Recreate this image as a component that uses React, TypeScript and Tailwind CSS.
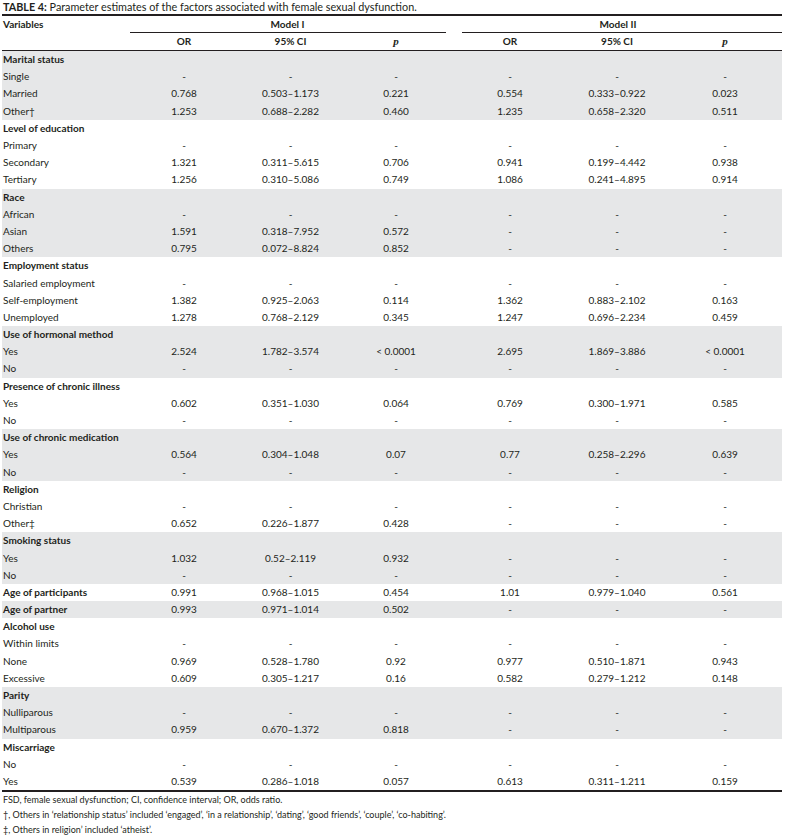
import React from "react";

type Row = { label: string; bold?: boolean; vals?: string[] };
type Group = { gray: boolean; rows: Row[] };

const D = ["-", "-", "-", "-", "-", "-"];

const groups: Group[] = [
  {
    gray: true,
    rows: [
      { label: "Marital status", bold: true },
      { label: "Single", vals: D },
      { label: "Married", vals: ["0.768", "0.503–1.173", "0.221", "0.554", "0.333–0.922", "0.023"] },
      { label: "Other†", vals: ["1.253", "0.688–2.282", "0.460", "1.235", "0.658–2.320", "0.511"] },
    ],
  },
  {
    gray: false,
    rows: [
      { label: "Level of education", bold: true },
      { label: "Primary", vals: D },
      { label: "Secondary", vals: ["1.321", "0.311–5.615", "0.706", "0.941", "0.199–4.442", "0.938"] },
      { label: "Tertiary", vals: ["1.256", "0.310–5.086", "0.749", "1.086", "0.241–4.895", "0.914"] },
    ],
  },
  {
    gray: true,
    rows: [
      { label: "Race", bold: true },
      { label: "African", vals: D },
      { label: "Asian", vals: ["1.591", "0.318–7.952", "0.572", "-", "-", "-"] },
      { label: "Others", vals: ["0.795", "0.072–8.824", "0.852", "-", "-", "-"] },
    ],
  },
  {
    gray: false,
    rows: [
      { label: "Employment status", bold: true },
      { label: "Salaried employment", vals: D },
      { label: "Self-employment", vals: ["1.382", "0.925–2.063", "0.114", "1.362", "0.883–2.102", "0.163"] },
      { label: "Unemployed", vals: ["1.278", "0.768–2.129", "0.345", "1.247", "0.696–2.234", "0.459"] },
    ],
  },
  {
    gray: true,
    rows: [
      { label: "Use of hormonal method", bold: true },
      { label: "Yes", vals: ["2.524", "1.782–3.574", "< 0.0001", "2.695", "1.869–3.886", "< 0.0001"] },
      { label: "No", vals: D },
    ],
  },
  {
    gray: false,
    rows: [
      { label: "Presence of chronic illness", bold: true },
      { label: "Yes", vals: ["0.602", "0.351–1.030", "0.064", "0.769", "0.300–1.971", "0.585"] },
      { label: "No", vals: D },
    ],
  },
  {
    gray: true,
    rows: [
      { label: "Use of chronic medication", bold: true },
      { label: "Yes", vals: ["0.564", "0.304–1.048", "0.07", "0.77", "0.258–2.296", "0.639"] },
      { label: "No", vals: D },
    ],
  },
  {
    gray: false,
    rows: [
      { label: "Religion", bold: true },
      { label: "Christian", vals: D },
      { label: "Other‡", vals: ["0.652", "0.226–1.877", "0.428", "-", "-", "-"] },
    ],
  },
  {
    gray: true,
    rows: [
      { label: "Smoking status", bold: true },
      { label: "Yes", vals: ["1.032", "0.52–2.119", "0.932", "-", "-", "-"] },
      { label: "No", vals: D },
    ],
  },
  {
    gray: false,
    rows: [{ label: "Age of participants", bold: true, vals: ["0.991", "0.968–1.015", "0.454", "1.01", "0.979–1.040", "0.561"] }],
  },
  {
    gray: true,
    rows: [{ label: "Age of partner", bold: true, vals: ["0.993", "0.971–1.014", "0.502", "-", "-", "-"] }],
  },
  {
    gray: false,
    rows: [
      { label: "Alcohol use", bold: true },
      { label: "Within limits", vals: D },
      { label: "None", vals: ["0.969", "0.528–1.780", "0.92", "0.977", "0.510–1.871", "0.943"] },
      { label: "Excessive", vals: ["0.609", "0.305–1.217", "0.16", "0.582", "0.279–1.212", "0.148"] },
    ],
  },
  {
    gray: true,
    rows: [
      { label: "Parity", bold: true },
      { label: "Nulliparous", vals: D },
      { label: "Multiparous", vals: ["0.959", "0.670–1.372", "0.818", "-", "-", "-"] },
    ],
  },
  {
    gray: false,
    rows: [
      { label: "Miscarriage", bold: true },
      { label: "No", vals: D },
      { label: "Yes", vals: ["0.539", "0.286–1.018", "0.057", "0.613", "0.311–1.211", "0.159"] },
    ],
  },
];

const GRID =
  "grid grid-cols-[129px_106px_107px_104px_10px_104px_110px_106px_1fr] items-center";

function Cell({ v }: { v?: string }) {
  return <div className="text-center whitespace-nowrap">{v ?? ""}</div>;
}

function PHead() {
  return (
    <div className="text-center font-['Liberation_Serif',serif] italic font-bold text-[11px] leading-none">
      p
    </div>
  );
}

export default function App() {
  return (
    <div className="w-[786px] h-[835px] bg-white text-[#231f20] font-['Lato',sans-serif] text-[10px] overflow-hidden">
      <div className="ml-[2px] w-[780px]">
        <div className="h-[14px] flex items-center pl-[1px] pt-[1px] whitespace-nowrap text-[10.8px]">
          <span className="font-bold">TABLE 4:</span>
          <span>&nbsp;Parameter estimates of the factors associated with female sexual dysfunction.</span>
        </div>
        <div className="h-[2px] bg-[#231f20]" />
        {/* header row 1 */}
        <div className={`${GRID} h-[16px] font-bold`}>
          <div className="pl-[1px]">Variables</div>
          <div className="col-span-3 text-center pr-[4px]">Model I</div>
          <div />
          <div className="col-span-3 text-center">Model II</div>
          <div />
        </div>
        <div className="flex h-[1px]">
          <div className="w-[128px]" />
          <div className="w-[316px] bg-[#231f20]" />
          <div className="w-[16px]" />
          <div className="w-[320px] bg-[#231f20]" />
        </div>
        <div className={`${GRID} h-[17px] font-bold`}>
          <div />
          <Cell v="OR" />
          <Cell v="95% CI" />
          <PHead />
          <div />
          <Cell v="OR" />
          <Cell v="95% CI" />
          <PHead />
          <div />
        </div>
        <div className="h-[1px] bg-[#231f20]" />
        {groups.map((g, gi) => (
          <div key={gi} className={g.gray ? "bg-[#e6e7e8]" : "bg-white"}>
            {g.rows.map((r, ri) => (
              <div key={ri} className={`${GRID} h-[17.2px]`}>
                <div className={`pl-[1px] whitespace-nowrap ${r.bold ? "font-bold" : ""}`}>{r.label}</div>
                <Cell v={r.vals?.[0]} />
                <Cell v={r.vals?.[1]} />
                <Cell v={r.vals?.[2]} />
                <div />
                <Cell v={r.vals?.[3]} />
                <Cell v={r.vals?.[4]} />
                <Cell v={r.vals?.[5]} />
                <div />
              </div>
            ))}
          </div>
        ))}
        <div className="h-[2px] bg-[#231f20]" />
        <div className="text-[9px] pl-[1px] flex flex-col">
          <div className="h-[15px] flex items-center whitespace-nowrap">FSD, female sexual dysfunction; CI, confidence interval; OR, odds ratio.</div>
          <div className="h-[15px] flex items-center whitespace-nowrap">
            †, Others in ‘relationship status’ included ‘engaged’, ‘in a relationship’, ‘dating’, ‘good friends’, ‘couple’, ‘co-habiting’.
          </div>
          <div className="h-[15px] flex items-center whitespace-nowrap">‡, Others in religion’ included ‘atheist’.</div>
        </div>
      </div>
    </div>
  );
}
